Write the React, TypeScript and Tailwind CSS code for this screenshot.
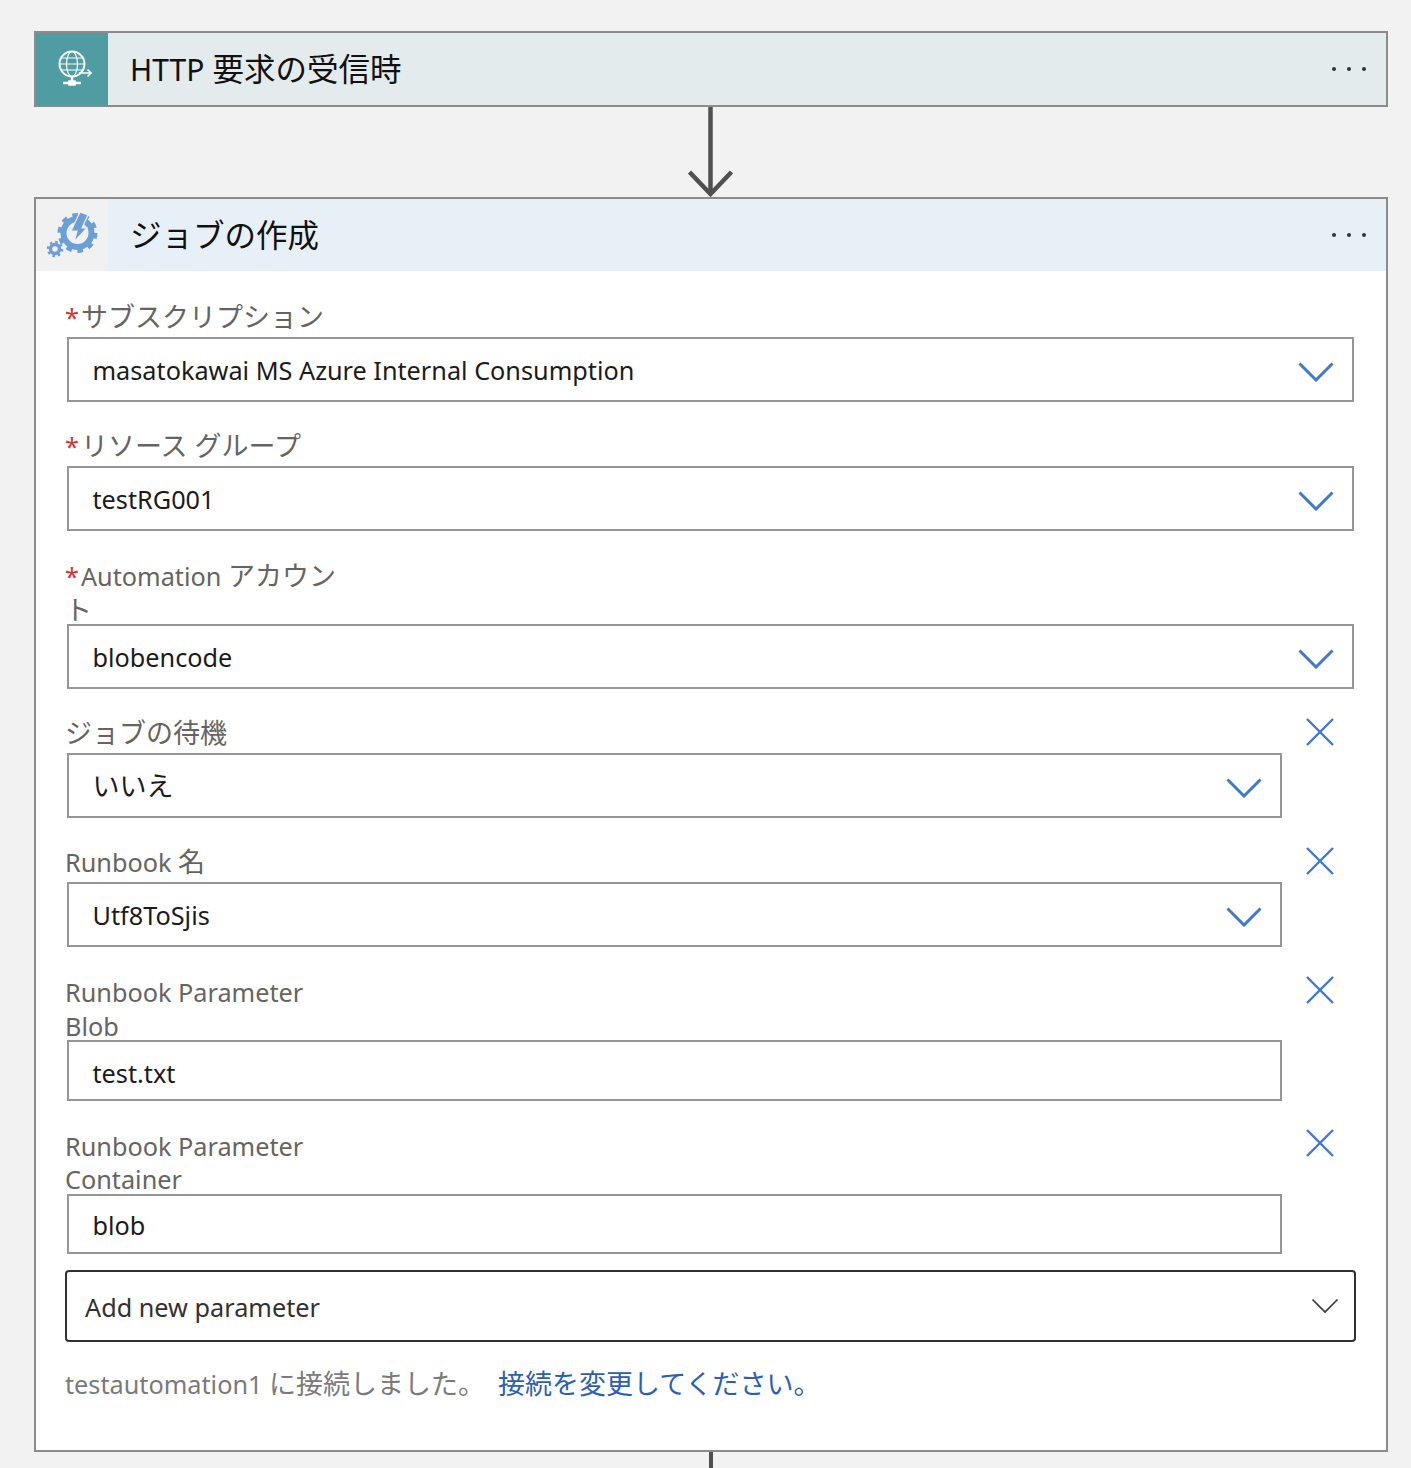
import { ReactNode } from "react";

const fontStack = { fontFamily: '"Noto Sans", "Noto Sans CJK JP", sans-serif' };

function Dots() {
  return (
    <div className="ml-auto mr-[20px] flex gap-[11px]">
      <span className="h-[4px] w-[4px] rounded-full bg-[#333]" />
      <span className="h-[4px] w-[4px] rounded-full bg-[#333]" />
      <span className="h-[4px] w-[4px] rounded-full bg-[#333]" />
    </div>
  );
}

// Japanese runs sit a little larger than the Latin text next to them
function J({ children }: { children: ReactNode }) {
  return <span className="text-[27px]">{children}</span>;
}

function GlobeIcon() {
  return (
    <svg width="40" height="40" viewBox="0 0 40 40" fill="none" stroke="#fff" strokeWidth="1.5">
      <circle cx="20" cy="15" r="12.5" strokeWidth="2" />
      <ellipse cx="20" cy="15" rx="5.5" ry="12.5" strokeWidth="1.2" />
      <path d="M8 15h24M10 9h20M10 21h20" strokeWidth="1.2" />
      <path d="M20 28v5" strokeWidth="2.5" />
      <path d="M11 34h18" strokeWidth="2.5" />
      <path d="M17 32h6v4h-6z" fill="#fff" />
      <path d="M27 24h12M35.5 20.5l3.5 3.5-3.5 3.5" strokeWidth="1.6" fill="#4f9ca3" />
    </svg>
  );
}

function GearIcon() {
  return (
    <svg width="54" height="46" viewBox="0 0 54 46" fill="none">
      <circle cx="32.5" cy="21" r="14" stroke="#6a9fd8" strokeWidth="6" />
      <circle cx="32.5" cy="21" r="18" stroke="#6a9fd8" strokeWidth="4" strokeDasharray="5.6 5.7" />
      <path d="M35 0l8 3-6 13h5L29 30l3-11h-6z" fill="#6a9fd8" stroke="#f1f1f1" strokeWidth="1.2" />
      <circle cx="10" cy="37" r="4.5" stroke="#6a9fd8" strokeWidth="3.4" />
      <circle cx="10" cy="37" r="7" stroke="#6a9fd8" strokeWidth="2.5" strokeDasharray="2.5 3" />
    </svg>
  );
}

function Chevron({ color = "#3f78d1", width = 36, height = 20, stroke = 3 }: { color?: string; width?: number; height?: number; stroke?: number }) {
  return (
    <svg width={width} height={height} viewBox={`0 0 ${width} ${height}`} fill="none" stroke={color} strokeWidth={stroke}>
      <path d={`M1.5 1.5L${width / 2} ${height - 2}L${width - 1.5} 1.5`} />
    </svg>
  );
}

function CloseIcon() {
  return (
    <svg width="30" height="30" viewBox="0 0 30 30" fill="none" stroke="#3f78d1" strokeWidth="2.4">
      <path d="M2 2l26 26M28 2L2 28" />
    </svg>
  );
}

function Required() {
  return <span className="mr-[2px] text-[#d13438]">*</span>;
}

function Field({
  label,
  value,
  outer,
  labelClass,
  inputClass,
  select = true,
  removable = false,
  closeClass = "",
}: {
  label: ReactNode;
  value: ReactNode;
  outer: string;
  labelClass: string;
  inputClass: string;
  select?: boolean;
  removable?: boolean;
  closeClass?: string;
}) {
  return (
    <div className={`flex ${outer}`}>
      <div className="min-w-0 flex-1">
        <div className={`text-[25.25px] text-[#666462] ${labelClass}`}>{label}</div>
        <div
          className={`ml-[2px] flex items-center border-2 border-[#969696] bg-white pl-[23.5px] text-[25.25px] text-[#1b1b1b] ${inputClass} ${
            removable ? "" : "mr-[2px]"
          }`}
        >
          {value}
          {select && (
            <span className="ml-auto mr-[18px] mt-[3px]">
              <Chevron />
            </span>
          )}
        </div>
      </div>
      {removable && (
        <div className="flex w-[74px] justify-center pl-[2px]">
          <span className={`block ${closeClass}`}>
            <CloseIcon />
          </span>
        </div>
      )}
    </div>
  );
}

export default function App() {
  return (
    <div className="min-h-[1468px] overflow-hidden bg-[#f2f2f2] pl-[34px] pr-[23px] pt-[31px]" style={fontStack}>
      <div className="flex h-[76px] items-center border-2 border-[#8c8a8a] bg-[#e3ebed]">
        <div className="flex h-full w-[72px] items-center justify-center bg-[#4f9ca3]">
          <GlobeIcon />
        </div>
        <div className="ml-[22px] text-[31.5px] text-[#111]">
          <span className="text-[30px]">HTTP</span> 要求の受信時
        </div>
        <Dots />
      </div>

      <div className="flex h-[90px] justify-center">
        <svg width="46" height="90" viewBox="0 0 46 90" fill="none" stroke="#505050" strokeWidth="4.5">
          <path d="M22.5 0v87" />
          <path d="M1.5 65l21 22 21-22" />
        </svg>
      </div>

      <div className="h-[1255px] border-2 border-[#8c8a8a] bg-white">
        <div className="flex h-[72px] items-center bg-[#e8f0f7]">
          <div className="flex h-full w-[72px] items-center justify-center bg-[#f1f1f1]">
            <GearIcon />
          </div>
          <div className="ml-[22px] text-[31.5px] text-[#111]">ジョブの作成</div>
          <Dots />
        </div>

        <div className="pl-[29px] pr-[30px]">
          <Field
            outer="mt-[29px]"
            labelClass="h-[37px] leading-[34px]"
            inputClass="h-[65px] pt-[2px]"
            label={<><Required /><J>サブスクリプション</J></>}
            value="masatokawai MS Azure Internal Consumption"
          />
          <Field
            outer="mt-[27px]"
            labelClass="h-[37px] leading-[34px]"
            inputClass="h-[65px] pt-[2px]"
            label={<><Required /><J>リソース グループ</J></>}
            value="testRG001"
          />
          <Field
            outer="mt-[28px]"
            labelClass="h-[65px] leading-[33px]"
            inputClass="h-[65px] pt-[2px]"
            label={<><Required />Automation <J>アカウン</J><br /><J>ト</J></>}
            value="blobencode"
          />
          <Field
            outer="mt-[27px]"
            labelClass="h-[37px] leading-[34px]"
            inputClass="h-[65px] pt-[2px]"
            label={<J>ジョブの待機</J>}
            value={<J>いいえ</J>}
            removable
            closeClass="mt-[1px]"
          />
          <Field
            outer="mt-[27px]"
            labelClass="h-[37px] leading-[34px]"
            inputClass="h-[65px] pt-[2px]"
            label={<>Runbook <J>名</J></>}
            value="Utf8ToSjis"
            removable
            closeClass="mt-[1px]"
          />
          <Field
            outer="mt-[28px]"
            labelClass="h-[65px] leading-[34px]"
            inputClass="h-[61px] pt-[6px]"
            label={<>Runbook Parameter<br />Blob</>}
            value="test.txt"
            select={false}
            removable
          />
          <Field
            outer="mt-[29px]"
            labelClass="h-[64px] leading-[33px]"
            inputClass="h-[60px] pt-[4px]"
            label={<>Runbook Parameter<br />Container</>}
            value="blob"
            select={false}
            removable
            closeClass="-mt-[2px]"
          />

          <div className="mt-[16px] flex h-[72px] items-center rounded-[4px] border-2 border-[#323130] pl-[18px] text-[25.25px] text-[#323130]">
            <span className="pt-[4px]">Add new parameter</span>
            <span className="ml-auto mr-[15px]">
              <Chevron color="#3b3a39" width={28} height={16} stroke={1.7} />
            </span>
          </div>

          <div className="mt-[25px] text-[25.25px] leading-[34px] text-[#7a7a7a]">
            testautomation1 <J>に接続しました。</J>
            <span className="ml-[13px] text-[#2b5fb3]"><J>接続を変更してください。</J></span>
          </div>
        </div>
      </div>

      <div className="flex h-[16px] justify-center">
        <div className="mr-[1px] h-full w-[4px] bg-[#505050]" />
      </div>
    </div>
  );
}
